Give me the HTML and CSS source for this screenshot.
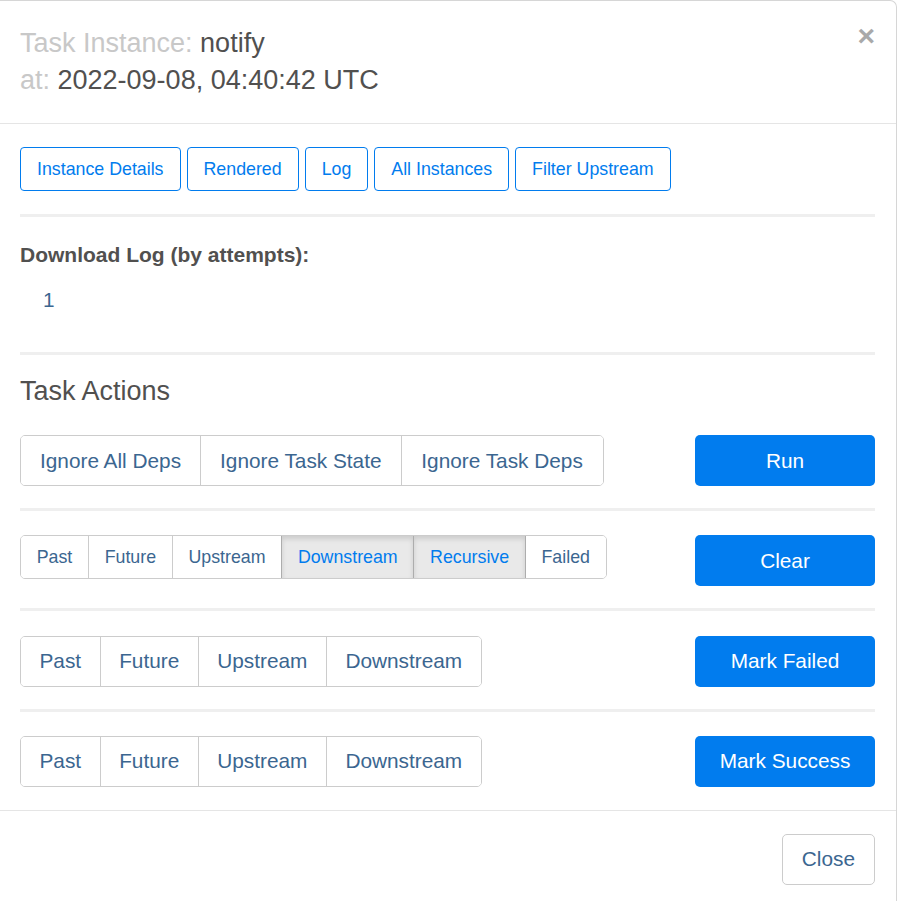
FILE: index.html
```html
<!DOCTYPE html>
<html>
<head>
<meta charset="utf-8">
<title>Task Instance</title>
<link rel="stylesheet" href="styles.css">
</head>
<body>
<div class="modal">
  <div class="modal-header">
    <div class="modal-title">
      <div><span class="muted">Task Instance:</span> notify</div>
      <div><span class="muted">at:</span> 2022-09-08, 04:40:42 UTC</div>
    </div>
    <button class="close" type="button">&times;</button>
  </div>
  <div class="modal-body">
    <div class="nav-buttons">
      <a class="btn-outline">Instance Details</a>
      <a class="btn-outline">Rendered</a>
      <a class="btn-outline">Log</a>
      <a class="btn-outline">All Instances</a>
      <a class="btn-outline">Filter Upstream</a>
    </div>
    <hr class="divider first">
    <div class="download-label">Download Log (by attempts):</div>
    <div class="attempts"><a class="attempt">1</a></div>
    <hr class="divider second">
    <div class="section-title">Task Actions</div>

    <div class="action-row">
      <div class="btn-group deps">
        <span class="seg">Ignore All Deps</span>
        <span class="seg">Ignore Task State</span>
        <span class="seg">Ignore Task Deps</span>
      </div>
      <a class="btn-primary">Run</a>
    </div>
    <hr class="divider row-sep">

    <div class="action-row">
      <div class="btn-group small">
        <span class="seg">Past</span>
        <span class="seg">Future</span>
        <span class="seg">Upstream</span>
        <span class="seg active">Downstream</span>
        <span class="seg active">Recursive</span>
        <span class="seg">Failed</span>
      </div>
      <a class="btn-primary">Clear</a>
    </div>
    <hr class="divider row-sep">

    <div class="action-row">
      <div class="btn-group">
        <span class="seg">Past</span>
        <span class="seg">Future</span>
        <span class="seg">Upstream</span>
        <span class="seg">Downstream</span>
      </div>
      <a class="btn-primary">Mark Failed</a>
    </div>
    <hr class="divider row-sep">

    <div class="action-row">
      <div class="btn-group">
        <span class="seg">Past</span>
        <span class="seg">Future</span>
        <span class="seg">Upstream</span>
        <span class="seg">Downstream</span>
      </div>
      <a class="btn-primary">Mark Success</a>
    </div>
  </div>
  <div class="modal-footer">
    <a class="btn-default">Close</a>
  </div>
</div>
</body>
</html>
```

FILE: styles.css
```css
* { box-sizing: border-box; }

html, body {
  margin: 0;
  padding: 0;
  background: #ffffff;
}

body {
  font-family: "Liberation Sans", Arial, Helvetica, sans-serif;
  color: #51504f;
}

.modal {
  width: 897px;
  border-top: 1px solid #d6d6d6;
  border-right: 1px solid #d6d6d6;
  border-top-right-radius: 7px;
  background: #fff;
  min-height: 920px;
}

.modal-header {
  display: flex;
  justify-content: space-between;
  align-items: flex-start;
  padding: 24px 20px 24px 20px;
  border-bottom: 1px solid #e5e5e5;
}

.modal-title {
  font-size: 27px;
  line-height: 37px;
  color: #51504f;
}

.muted { color: #c8c8c8; }

.close {
  border: 0;
  background: transparent;
  padding: 0;
  margin: -4px 1px 0 0;
  font-family: "Liberation Sans", Arial, sans-serif;
  font-size: 30px;
  font-weight: bold;
  line-height: 30px;
  color: #a9a9a9;
  cursor: pointer;
}

.modal-body {
  padding: 23px 21px 23px 20px;
}

.nav-buttons {
  display: flex;
  gap: 6px;
}

.btn-outline {
  display: inline-flex;
  align-items: center;
  height: 44px;
  padding: 0 16px;
  border: 1px solid #017cee;
  border-radius: 4px;
  color: #017cee;
  font-size: 17.8px;
  background: #fff;
}

.divider {
  border: 0;
  border-top: 3px solid #efefef;
  margin: 0;
}

.divider.first { margin-top: 23px; }

.download-label {
  margin-top: 23px;
  font-size: 21px;
  line-height: 30px;
  font-weight: bold;
  color: #51504f;
}

.attempts {
  margin-top: 15px;
  padding-left: 23px;
  font-size: 20.8px;
  line-height: 30px;
}

.attempt { color: #3b6690; }

.divider.second { margin-top: 37px; }

.section-title {
  margin-top: 21px;
  font-size: 27px;
  line-height: 31px;
  color: #51504f;
}

.action-row {
  display: flex;
  justify-content: space-between;
  align-items: flex-start;
}

.section-title + .action-row { margin-top: 28px; }

.divider.row-sep { margin: 22px 0 24.3px; }

.btn-group {
  display: flex;
  border: 1px solid #cccccc;
  border-radius: 5px;
  overflow: hidden;
}

.seg {
  display: inline-flex;
  align-items: center;
  height: 49px;
  padding: 0 18.5px;
  font-size: 20.8px;
  color: #3b6690;
  background: #fff;
  border-left: 1px solid #cccccc;
}

.seg:first-child { border-left: 0; }

.btn-group.deps .seg { padding: 0 19px; }
.btn-group.deps .seg:last-child { padding: 0 19.8px; }

.btn-group.small .seg {
  height: 42px;
  padding: 0 15.7px;
  font-size: 17.8px;
}

.seg.active {
  background: #e9e9e9;
  color: #017cee;
  border-left-color: #adadad;
  box-shadow: inset 0 3px 5px rgba(0, 0, 0, 0.125);
}

.seg.active + .seg { border-left-color: #adadad; }

.btn-primary {
  display: inline-flex;
  align-items: center;
  justify-content: center;
  width: 180px;
  height: 51px;
  border-radius: 5px;
  background: #017cee;
  color: #fff;
  font-size: 20.8px;
}

.modal-footer {
  display: flex;
  justify-content: flex-end;
  padding: 23px 21px 20px 20px;
  border-top: 1px solid #e5e5e5;
}

.btn-default {
  display: inline-flex;
  align-items: center;
  height: 51px;
  padding: 0 19px;
  border: 1px solid #cccccc;
  border-radius: 5px;
  font-size: 20.8px;
  color: #3b6690;
  background: #fff;
}
```
